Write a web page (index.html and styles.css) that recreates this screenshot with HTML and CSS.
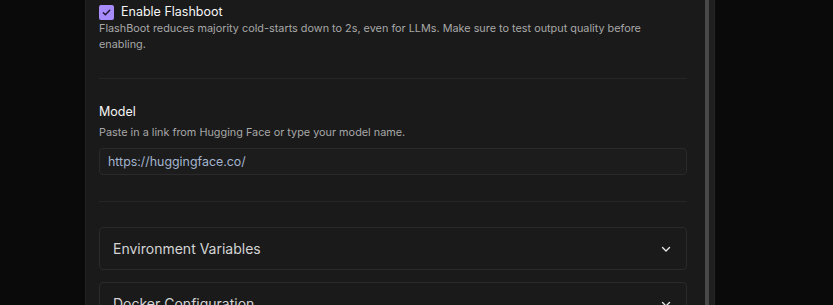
FILE: index.html
```html
<!DOCTYPE html>
<html lang="en">
<head>
    <meta charset="UTF-8">
    <meta name="viewport" content="width=device-width, initial-scale=1.0">
    <title>Endpoint Settings</title>
    <link rel="stylesheet" href="styles.css">
</head>
<body>
    <div class="page">
        <div class="panel">
            <div class="panel-content">
                <div class="section section-first">
                    <label class="check-row">
                        <span class="checkbox">
                            <svg width="11" height="11" viewBox="0 0 12 12" fill="none">
                                <path d="M2.5 6.2l2.3 2.3 4.7-5" stroke="#1a1030" stroke-width="1.5" stroke-linecap="round" stroke-linejoin="round"/>
                            </svg>
                        </span>
                        Enable Flashboot
                    </label>
                    <p class="help">FlashBoot reduces majority cold-starts down to 2s, even for LLMs. Make sure to test output quality before enabling.</p>
                </div>

                <div class="section">
                    <div class="field-label">Model</div>
                    <p class="help help-gap">Paste in a link from Hugging Face or type your model name.</p>
                    <input type="text" class="text-input" value="https://huggingface.co/">
                </div>

                <div class="section section-accordions">
                    <div class="accordion">
                        <span>Environment Variables</span>
                        <svg class="chevron" width="12" height="12" viewBox="0 0 12 12" fill="none">
                            <path d="M2.5 4.5l3.5 3.5 3.5-3.5" stroke="#e5e5e5" stroke-width="1.4" stroke-linecap="round" stroke-linejoin="round"/>
                        </svg>
                    </div>
                    <div class="accordion">
                        <span>Docker Configuration</span>
                        <svg class="chevron" width="12" height="12" viewBox="0 0 12 12" fill="none">
                            <path d="M2.5 4.5l3.5 3.5 3.5-3.5" stroke="#e5e5e5" stroke-width="1.4" stroke-linecap="round" stroke-linejoin="round"/>
                        </svg>
                    </div>
                </div>
            </div>
            <div class="scrollbar">
                <div class="scroll-thumb"></div>
            </div>
        </div>
    </div>
</body>
</html>
```

FILE: styles.css
```css
:root {
    --page-bg: #0a0a0a;
    --panel-bg: #1a1a1a;
    --border: #2a2a2a;
    --divider: #262626;
    --text-main: #f5f5f5;
    --text-muted: #a8a8a8;
    --accent: #a78bfa;
}

* {
    margin: 0;
    padding: 0;
    box-sizing: border-box;
    font-family: Inter, 'Noto Sans', sans-serif;
}

body {
    background-color: var(--page-bg);
    color: var(--text-main);
    height: 305px;
    overflow: hidden;
}

.page {
    display: flex;
    height: 305px;
    padding-left: 85px;
}

.panel {
    display: flex;
    width: 630px;
    height: 305px;
    background-color: var(--panel-bg);
    border-left: 1px solid #222;
    border-right: 1px solid #262626;
    overflow: hidden;
}

.panel-content {
    flex: 1;
    padding: 4px 18px 0 13px;
}

.section {
    border-top: 1px solid var(--divider);
    padding: 25px 0 26px;
}

.section-first {
    border-top: none;
    padding: 0 0 26px;
}

.check-row {
    display: flex;
    align-items: center;
    gap: 7px;
    height: 16px;
    font-size: 12.5px;
    line-height: 16px;
    color: var(--text-main);
}

.checkbox {
    width: 15px;
    height: 15px;
    border-radius: 2px;
    background-color: var(--accent);
    display: flex;
    align-items: center;
    justify-content: center;
}

.help {
    font-size: 10.85px;
    line-height: 16px;
    color: var(--text-muted);
}

.help-gap {
    margin-top: 4px;
}

.field-label {
    font-size: 12.5px;
    line-height: 16px;
    color: var(--text-main);
}

.text-input {
    display: block;
    width: 100%;
    height: 27px;
    margin-top: 8px;
    padding: 0 8px;
    background-color: #1c1c1c;
    border: 1px solid var(--border);
    border-radius: 4px;
    color: #a3b4cf;
    font-size: 12.4px;
    outline: none;
}

.section-accordions {
    display: flex;
    flex-direction: column;
    gap: 12px;
}

.accordion {
    display: flex;
    align-items: center;
    justify-content: space-between;
    height: 43px;
    padding: 0 14px 0 13px;
    border: 1px solid var(--border);
    border-radius: 4px;
    font-size: 14px;
    color: #d4d4d4;
    flex-shrink: 0;
}

.scrollbar {
    width: 9px;
    background-color: #1f1f1f;
}

.scroll-thumb {
    width: 4px;
    height: 100%;
    background-color: #484848;
}
```
